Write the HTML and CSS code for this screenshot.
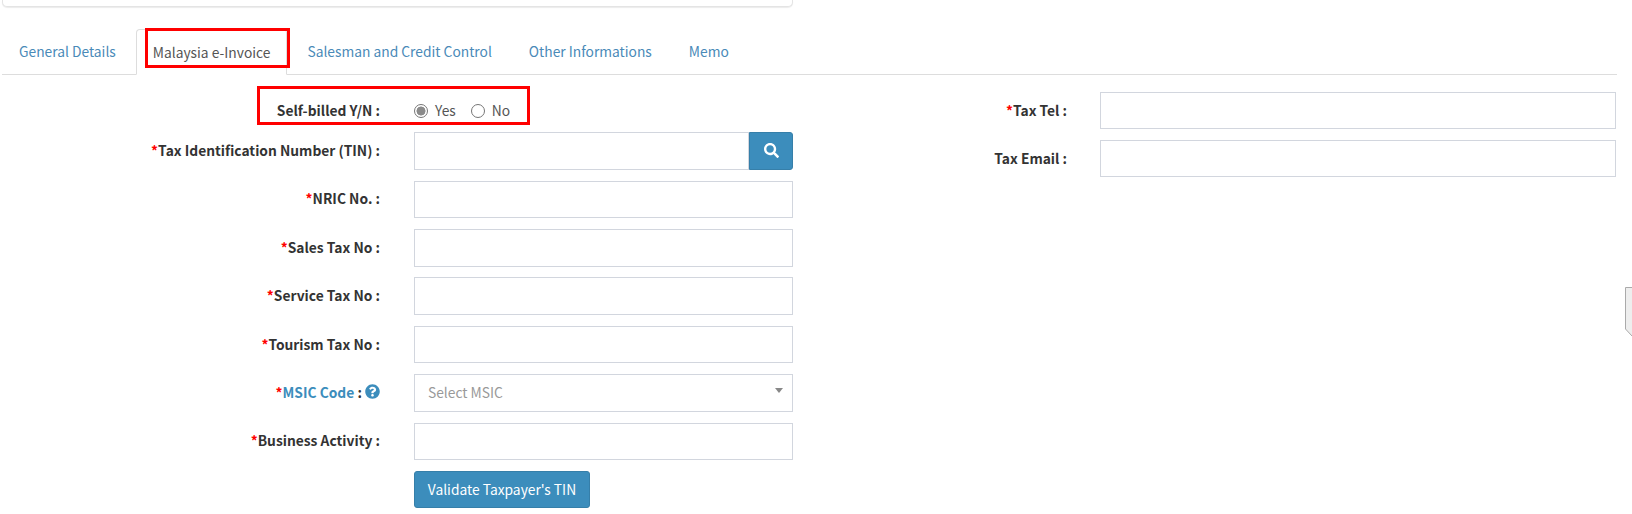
FILE: index.html
```html
<!DOCTYPE html>
<html lang="en">
<head>
    <meta charset="UTF-8">
    <meta name="viewport" content="width=device-width, initial-scale=1.0">
    <title>Malaysia e-Invoice</title>
    <link rel="stylesheet" href="styles.css">
</head>
<body>
    <div class="top-card"></div>

    <ul class="tabs">
        <li><a href="#">General Details</a></li>
        <li class="active"><a href="#">Malaysia e-Invoice</a></li>
        <li><a href="#">Salesman and Credit Control</a></li>
        <li><a href="#">Other Informations</a></li>
        <li><a href="#">Memo</a></li>
    </ul>

    <form class="form">
        <div class="col col-left">
            <div class="row row-radio">
                <label class="label">Self-billed Y/N :</label>
                <div class="radios">
                    <input type="radio" name="self" id="selfYes" checked>
                    <label for="selfYes">Yes</label>
                    <input type="radio" name="self" id="selfNo">
                    <label for="selfNo">No</label>
                </div>
            </div>
            <div class="row">
                <label class="label"><span class="req">*</span>Tax Identification Number (TIN) :</label>
                <div class="input-group">
                    <input type="text" class="input">
                    <button type="button" class="search-btn">
                        <svg class="search-icon" viewBox="0 0 512 512"><path d="M505 442.7L405.3 343c-4.5-4.5-10.6-7-17-7H372c27.6-35.3 44-79.7 44-128C416 93.1 322.9 0 208 0S0 93.1 0 208s93.1 208 208 208c48.3 0 92.7-16.4 128-44v16.3c0 6.4 2.5 12.5 7 17l99.7 99.7c9.4 9.4 24.6 9.4 33.9 0l28.3-28.3c9.4-9.4 9.4-24.6.1-34zM208 336c-70.7 0-128-57.2-128-128 0-70.7 57.2-128 128-128 70.7 0 128 57.2 128 128 0 70.7-57.2 128-128 128z"/></svg>
                    </button>
                </div>
            </div>
            <div class="row">
                <label class="label"><span class="req">*</span>NRIC No. :</label>
                <input type="text" class="input">
            </div>
            <div class="row">
                <label class="label"><span class="req">*</span>Sales Tax No :</label>
                <input type="text" class="input">
            </div>
            <div class="row">
                <label class="label"><span class="req">*</span>Service Tax No :</label>
                <input type="text" class="input">
            </div>
            <div class="row">
                <label class="label"><span class="req">*</span>Tourism Tax No :</label>
                <input type="text" class="input">
            </div>
            <div class="row">
                <label class="label"><span class="req">*</span><a href="#" class="label-link">MSIC Code</a> :
                    <svg class="help-icon" viewBox="0 0 512 512"><path d="M504 256c0 136.997-111.043 248-248 248S8 392.997 8 256C8 119.083 119.043 8 256 8s248 111.083 248 248zM262.655 90c-54.497 0-89.255 22.957-116.549 63.758-3.536 5.286-2.353 12.415 2.715 16.258l34.699 26.31c5.205 3.947 12.621 3.008 16.665-2.122 17.864-22.658 30.113-35.797 57.303-35.797 20.429 0 45.698 13.148 45.698 32.958 0 14.976-12.363 22.667-32.534 33.976C247.128 238.528 216 254.941 216 296v4c0 6.627 5.373 12 12 12h56c6.627 0 12-5.373 12-12v-1.333c0-28.462 83.186-29.647 83.186-106.667 0-58.002-60.165-102-116.531-102zM256 338c-25.365 0-46 20.635-46 46 0 25.364 20.635 46 46 46s46-20.636 46-46c0-25.365-20.635-46-46-46z"/></svg>
                </label>
                <div class="select">
                    <span>Select MSIC</span>
                    <b class="caret"></b>
                </div>
            </div>
            <div class="row">
                <label class="label"><span class="req">*</span>Business Activity :</label>
                <input type="text" class="input">
            </div>
            <div class="row row-action">
                <button type="button" class="btn-primary">Validate Taxpayer's TIN</button>
            </div>
        </div>

        <div class="col col-right">
            <div class="row">
                <label class="label"><span class="req">*</span>Tax Tel :</label>
                <input type="text" class="input">
            </div>
            <div class="row">
                <label class="label">Tax Email :</label>
                <input type="text" class="input">
            </div>
        </div>
    </form>

    <!-- red annotation boxes from the screenshot -->
    <div class="mark mark-tab"></div>
    <div class="mark mark-radio"></div>

    <svg class="side-handle" viewBox="0 0 8 50"><path d="M7 .5H.5V42L7 49" fill="#eee" stroke="#aaa"/></svg>
</body>
</html>
```

FILE: styles.css
```css
* {
    box-sizing: border-box;
}
body {
    font-family: "Noto Sans CJK SC", "Noto Sans", sans-serif;
    font-size: 13.8px;
    line-height: 20px;
    margin: 0;
    height: 514px;
    overflow: hidden;
    position: relative;
    background: #fff;
    color: #333;
}
a {
    text-decoration: none;
}
.top-card {
    width: 791px;
    height: 7px;
    margin-left: 2px;
    background: #fff;
    border: 1px solid #e4e4e4;
    border-top: none;
    border-radius: 0 0 5px 5px;
    box-shadow: 0 1px 1px rgba(0, 0, 0, 0.08);
}

/* tabs */
.tabs {
    display: flex;
    list-style: none;
    margin: 22px 15px 0 2px;
    padding: 0;
    height: 46px;
    border-bottom: 1px solid #ddd;
}
.tabs li {
    margin-right: 3px;
    height: 46px;
}
.tabs a {
    display: block;
    height: 45px;
    padding: 12px 17px;
    color: #4a8ab8;
}
.tabs .active a {
    height: 46px;
    color: #555;
    background: #fff;
    border: 1px solid #ddd;
    border-bottom-color: #fff;
    border-radius: 4px 4px 0 0;
    padding: 12px 16px;
}

/* form */
.form {
    display: flex;
    padding-top: 17px;
}
.col-left {
    width: 793px;
    flex: none;
}
.col-right {
    width: 823px;
    flex: none;
}
.row {
    display: flex;
    align-items: center;
    margin-bottom: 10.8px;
}
.col-right .row {
    margin-bottom: 11px;
}
.label {
    flex: none;
    width: 380px;
    margin-right: 34px;
    padding-bottom: 2px;
    text-align: right;
    font-weight: 700;
}
.col-right .label {
    width: 274px;
    margin-right: 33px;
}
.req {
    color: #f00;
}
.label-link {
    color: #3c8dbc;
}
.input {
    flex: 1;
    min-width: 0;
    height: 37.6px;
    padding: 6px 12px;
    border: 1px solid #d2d6de;
    background: #fff;
    outline: none;
}
.col-right .input {
    height: 37px;
}

/* self-billed radios */
.row-radio {
    height: 37px;
    margin-bottom: 3.2px;
}
.radios {
    display: flex;
    align-items: center;
    color: #555;
}
.radios input {
    appearance: none;
    width: 14px;
    height: 14px;
    margin: 0 7px 0 0;
    border: 1px solid #767676;
    border-radius: 50%;
    background: #fff;
}
.radios input:checked {
    background: radial-gradient(circle, #8a8a8a 0, #8a8a8a 4.2px, #fff 4.8px);
}
.radios label {
    margin-right: 15px;
    padding-bottom: 1px;
}

/* TIN search */
.input-group {
    flex: 1;
    display: flex;
}
.search-btn {
    flex: none;
    width: 44px;
    height: 37.6px;
    padding: 0;
    border: 1px solid #367fa9;
    border-radius: 0 3px 3px 0;
    background: #3c8dbc;
}
.search-icon {
    display: block;
    width: 15px;
    height: 15px;
    margin: 0 auto;
    fill: #fff;
}
.help-icon {
    width: 15px;
    height: 15px;
    fill: #3c8dbc;
    vertical-align: -1px;
}

/* select2 style dropdown */
.select {
    flex: 1;
    position: relative;
    height: 37.6px;
    padding: 7px 13px;
    border: 1px solid #d2d6de;
    color: #999;
}
.caret {
    position: absolute;
    top: 13px;
    right: 9px;
    border-top: 5px solid #888;
    border-left: 4px solid transparent;
    border-right: 4px solid transparent;
}

/* validate button */
.row-action {
    padding-left: 414px;
}
.btn-primary {
    width: 176px;
    height: 37px;
    padding: 0;
    font-family: inherit;
    font-size: 13.8px;
    color: #fff;
    background: #3c8dbc;
    border: 1px solid #367fa9;
    border-radius: 3px;
}

/* annotation overlays */
.mark {
    position: absolute;
    border: 3px solid #f00;
}
.mark-tab {
    left: 145px;
    top: 28px;
    width: 145px;
    height: 40px;
}
.mark-radio {
    left: 257px;
    top: 86px;
    width: 273px;
    height: 39px;
}
.side-handle {
    position: absolute;
    left: 1625px;
    top: 287px;
    width: 8px;
    height: 50px;
}
```
